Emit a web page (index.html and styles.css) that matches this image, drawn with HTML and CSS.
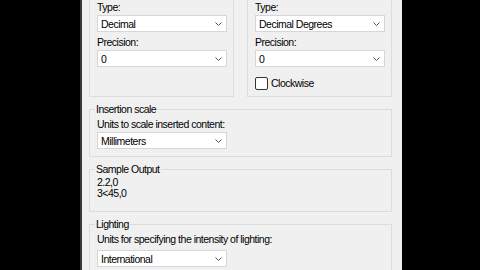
FILE: index.html
```html
<!DOCTYPE html>
<html>

<head>
	<meta charset="UTF-8">
	<title>Drawing Units</title>
	<link rel="stylesheet" href="styles.css">
</head>

<body>
	<div class="dialog">
		<div class="top-row">
			<fieldset class="group clipped">
				<label class="field-label">Type:</label>
				<div class="select">
					<span>Decimal</span>
					<svg class="chevron" viewBox="0 0 7 4"><polyline points="0.5,0.5 3.5,3.5 6.5,0.5" /></svg>
				</div>
				<label class="field-label spaced">Precision:</label>
				<div class="select">
					<span>0</span>
					<svg class="chevron" viewBox="0 0 7 4"><polyline points="0.5,0.5 3.5,3.5 6.5,0.5" /></svg>
				</div>
			</fieldset>
			<fieldset class="group clipped">
				<label class="field-label">Type:</label>
				<div class="select">
					<span>Decimal Degrees</span>
					<svg class="chevron" viewBox="0 0 7 4"><polyline points="0.5,0.5 3.5,3.5 6.5,0.5" /></svg>
				</div>
				<label class="field-label spaced">Precision:</label>
				<div class="select">
					<span>0</span>
					<svg class="chevron" viewBox="0 0 7 4"><polyline points="0.5,0.5 3.5,3.5 6.5,0.5" /></svg>
				</div>
				<label class="check">
					<span class="check-box"></span>
					<span>Clockwise</span>
				</label>
			</fieldset>
		</div>

		<fieldset class="group wide">
			<legend>Insertion scale</legend>
			<label class="field-label">Units to scale inserted content:</label>
			<div class="select">
				<span>Millimeters</span>
				<svg class="chevron" viewBox="0 0 7 4"><polyline points="0.5,0.5 3.5,3.5 6.5,0.5" /></svg>
			</div>
		</fieldset>

		<fieldset class="group wide sample">
			<legend>Sample Output</legend>
			<div class="sample-line">2.2,0</div>
			<div class="sample-line">3&lt;45,0</div>
		</fieldset>

		<fieldset class="group wide lighting">
			<legend>Lighting</legend>
			<label class="field-label">Units for specifying the intensity of lighting:</label>
			<div class="select">
				<span>International</span>
				<svg class="chevron" viewBox="0 0 7 4"><polyline points="0.5,0.5 3.5,3.5 6.5,0.5" /></svg>
			</div>
		</fieldset>
	</div>
</body>

</html>
```

FILE: styles.css
```css
html,
body {
	width: 100%;
	height: 100%;
	margin: 0;
	padding: 0;
	background: #000;
	overflow: hidden;
}

.dialog {
	box-sizing: border-box;
	width: 322px;
	height: 270px;
	margin-left: 80px;
	padding: 0 10px 0 7px;
	background: #f0f0f0;
	border-left: 2px solid #3a3a3a;
	overflow: hidden;
	font-family: "Liberation Sans", Arial, sans-serif;
	font-size: 10.5px;
	letter-spacing: -0.5px;
	color: #000;
}

.top-row {
	display: grid;
	grid-template-columns: 145px 145px;
	column-gap: 13px;
}

.group {
	box-sizing: border-box;
	min-width: 0;
	margin: 0;
	padding: 0 6px 6px 7px;
	border: 1px solid #dcdcdc;
}

/* the top edge of these two boxes lies above the visible area */
.group.clipped {
	border-top: none;
}

.group>legend {
	padding: 0 1px;
	margin-left: -2px;
	line-height: 15px;
}

.group.wide {
	width: 303px;
	margin-top: 5px;
	padding-bottom: 7px;
}

.group.sample {
	padding-bottom: 12px;
}

.group.lighting .field-label {
	margin-bottom: 3px;
}

.field-label {
	display: block;
	line-height: 15px;
	white-space: nowrap;
}

.field-label.spaced {
	margin-top: 3px;
}

.select {
	box-sizing: border-box;
	display: flex;
	align-items: center;
	justify-content: space-between;
	width: 130px;
	height: 17px;
	padding: 0 4px 0 3px;
	background: #fff;
	border: 1px solid #d6d6d6;
}

.chevron {
	width: 7px;
	height: 4px;
	fill: none;
	stroke: #555;
	stroke-width: 1;
}

.check {
	display: flex;
	align-items: center;
	gap: 3px;
	margin-top: 10px;
	line-height: 13px;
}

.check-box {
	box-sizing: border-box;
	width: 13px;
	height: 13px;
	background: #fff;
	border: 1px solid #333;
	border-radius: 2px;
}

.sample-line {
	line-height: 11px;
}
```
